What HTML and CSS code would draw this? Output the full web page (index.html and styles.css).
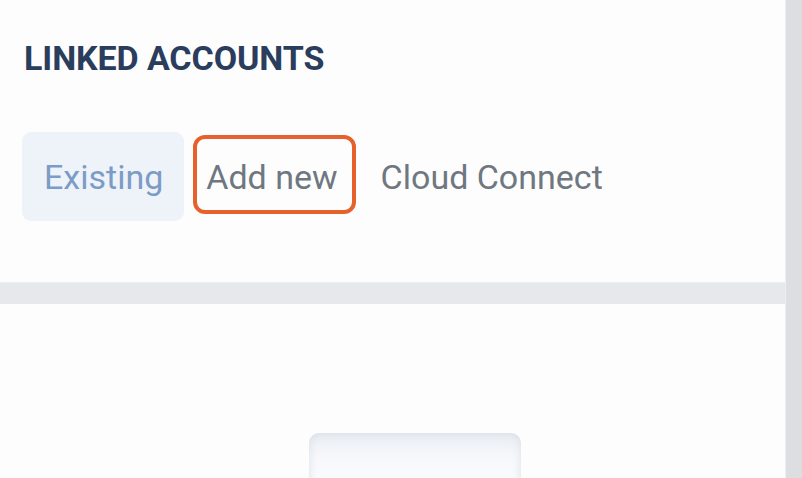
FILE: index.html
```html
<!DOCTYPE html>
<html lang="en">
<head>
    <meta charset="UTF-8">
    <meta name="viewport" content="width=device-width, initial-scale=1.0">
    <title>Linked accounts</title>
    <link rel="stylesheet" href="styles.css">
</head>
<body>
    <div class="page">
        <div class="main">
            <div class="card">
                <h2 class="title">LINKED ACCOUNTS</h2>
                <div class="tabs">
                    <div class="tab active">Existing</div>
                    <div class="tab marked">Add new</div>
                    <div class="tab">Cloud Connect</div>
                </div>
            </div>
            <div class="divider"></div>
            <div class="lower">
                <div class="placeholder"></div>
            </div>
        </div>
        <div class="scrollbar"></div>
    </div>
</body>
</html>
```

FILE: styles.css
```css
html, body {
    margin: 0;
    height: 100%;
}
body {
    font-family: Roboto, "Liberation Sans", sans-serif;
    background: #fdfdfe;
    overflow: hidden;
}
.page {
    display: flex;
    height: 478px;
}
.main {
    flex: 1;
    display: flex;
    flex-direction: column;
    overflow: hidden;
}
.scrollbar {
    width: 16px;
    background: #dcdee1;
    border-left: 1px solid #eceef0;
}
.card {
    flex-shrink: 0;
    height: 282px;
    box-sizing: border-box;
    padding: 38px 0 0 22px;
    background: #fdfdfe;
}
.title {
    margin: 0 0 0 2px;
    font-size: 34px;
    line-height: 40px;
    font-weight: 700;
    color: #2b3d5c;
    letter-spacing: -0.1px;
}
.tabs {
    display: flex;
    margin-top: 54px;
}
.tab {
    position: relative;
    height: 89px;
    display: flex;
    align-items: center;
    padding: 0 21px 0 22px;
    font-size: 34px;
    color: #6f7780;
}
.tab.active {
    background: #eef3fa;
    border-radius: 9px;
    color: #7b9cc6;
}
.tab.marked::after {
    content: "";
    position: absolute;
    left: 9px;
    right: 3px;
    top: 3px;
    bottom: 7px;
    border: 4px solid #e6612c;
    border-radius: 12px;
}
.divider {
    flex-shrink: 0;
    height: 21px;
    background: #e6e8eb;
    border-top: 1px solid #eceef0;
}
.lower {
    flex: 1;
    padding: 129px 0 0 309px;
    background: #fdfdfe;
}
.placeholder {
    width: 212px;
    height: 60px;
    border-radius: 10px 10px 0 0;
    background: linear-gradient(180deg, #e9edf3 0%, #f6f8fb 40%, #fbfcfd 100%);
    box-shadow: inset 0 0 8px rgba(200, 208, 220, 0.6);
}
```
